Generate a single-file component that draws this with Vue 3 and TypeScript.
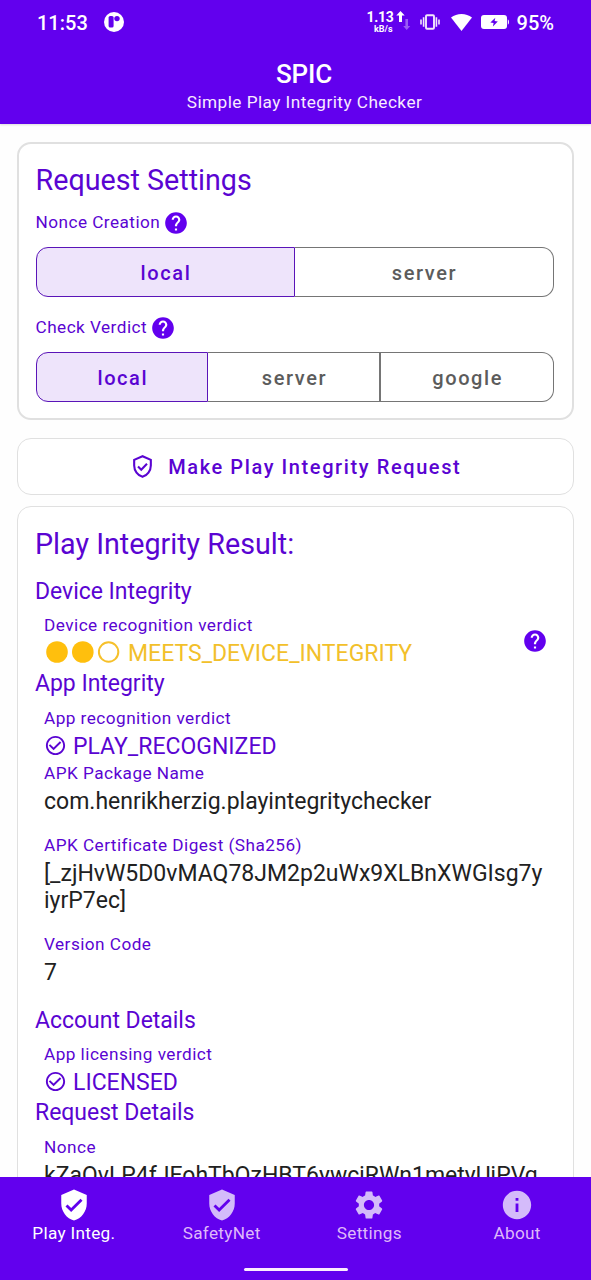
<script setup lang="ts">
interface Field {
  label: string
  lines: string[]
  kind: 'text' | 'ok' | 'device'
}
interface Section {
  title: string
  fields: Field[]
}

const nonceModes: string[] = ['local', 'server']
const verdictModes: string[] = ['local', 'server', 'google']

const sections: Section[] = [
  {
    title: 'Device Integrity',
    fields: [{ label: 'Device recognition verdict', lines: ['MEETS_DEVICE_INTEGRITY'], kind: 'device' }],
  },
  {
    title: 'App Integrity',
    fields: [
      { label: 'App recognition verdict', lines: ['PLAY_RECOGNIZED'], kind: 'ok' },
      { label: 'APK Package Name', lines: ['com.henrikherzig.playintegritychecker'], kind: 'text' },
      { label: 'APK Certificate Digest (Sha256)', lines: ['[_zjHvW5D0vMAQ78JM2p2uWx9XLBnXWGIsg7y', 'iyrP7ec]'], kind: 'text' },
      { label: 'Version Code', lines: ['7'], kind: 'text' },
    ],
  },
  {
    title: 'Account Details',
    fields: [{ label: 'App licensing verdict', lines: ['LICENSED'], kind: 'ok' }],
  },
  {
    title: 'Request Details',
    fields: [{ label: 'Nonce', lines: ['kZaQvLP4fJEohTbQzHBT6ywcjRWn1metyUjPVg'], kind: 'text' }],
  },
]

const shield = 'M12 1L3 5v6c0 5.55 3.84 10.74 9 12 5.16-1.26 9-6.45 9-12V5l-9-4zm-2 16l-4-4 1.41-1.41L10 14.17l6.59-6.59L18 9l-8 8z'
const tabs: { label: string; path: string }[] = [
  { label: 'Play Integ.', path: shield },
  { label: 'SafetyNet', path: shield },
  {
    label: 'Settings',
    path: 'M19.14 12.94c.04-.3.06-.61.06-.94 0-.32-.02-.64-.07-.94l2.03-1.58c.18-.14.23-.41.12-.61l-1.92-3.32c-.12-.22-.37-.29-.59-.22l-2.39.96c-.5-.38-1.03-.7-1.62-.94l-.36-2.54c-.04-.24-.24-.41-.48-.41h-3.84c-.24 0-.43.17-.47.41l-.36 2.54c-.59.24-1.13.57-1.62.94l-2.39-.96c-.22-.08-.47 0-.59.22L2.74 8.87c-.12.21-.08.47.12.61l2.03 1.58c-.05.3-.09.63-.09.94s.02.64.07.94l-2.03 1.58c-.18.14-.23.41-.12.61l1.92 3.32c.12.22.37.29.59.22l2.39-.96c.5.38 1.03.7 1.62.94l.36 2.54c.05.24.24.41.48.41h3.84c.24 0 .44-.17.47-.41l.36-2.54c.59-.24 1.13-.56 1.62-.94l2.39.96c.22.08.47 0 .59-.22l1.92-3.32c.12-.22.07-.47-.12-.61l-2.01-1.58zM12 15.6c-1.98 0-3.6-1.62-3.6-3.6s1.62-3.6 3.6-3.6 3.6 1.62 3.6 3.6-1.62 3.6-3.6 3.6z',
  },
  { label: 'About', path: 'M12 2C6.48 2 2 6.48 2 12s4.48 10 10 10 10-4.48 10-10S17.52 2 12 2zm1 15h-2v-6h2v6zm0-8h-2V7h2v2z' },
]
const help = 'M12 2C6.48 2 2 6.48 2 12s4.48 10 10 10 10-4.48 10-10S17.52 2 12 2zm1 17h-2v-2h2v2zm2.07-7.75l-.9.92C13.45 12.9 13 13.5 13 15h-2v-.5c0-1.1.45-2.1 1.17-2.83l1.24-1.26c.37-.36.59-.86.59-1.41 0-1.1-.9-2-2-2s-2 .9-2 2H8c0-2.21 1.79-4 4-4s4 1.79 4 4c0 .88-.36 1.68-.93 2.25z'
</script>

<template>
  <div class="screen">
    <header class="app-bar">
      <div class="status">
        <span class="clock">11:53</span>
        <svg class="notif" viewBox="0 0 20 20">
          <circle cx="10" cy="10" r="10" fill="#fff" />
          <rect x="4.6" y="4" width="5" height="11.6" rx="1.6" fill="#6200ee" />
          <circle cx="13" cy="6.6" r="2.7" fill="#6200ee" />
        </svg>
        <span class="spacer"></span>
        <span class="net"><span class="rate">1.13</span><span class="unit">kB/s</span></span>
        <svg class="arrows" viewBox="0 0 16 22">
          <path d="M4.500 1L8.700 5.600H6V12H3V5.600H.3z" fill="#fff" />
          <path d="M10.700 20L14.200 16H12V9H9.400V16H7.200z" fill="#9a5cf5" />
        </svg>
        <svg class="vibrate" viewBox="0 0 20 16" fill="none" stroke="#f3e6fb">
          <rect x="6" y="1.200" width="8" height="13.600" rx="1" stroke-width="1.900" />
          <path d="M3.600 3.200V12.800M16.400 3.200V12.800" stroke-width="1.600" />
          <path d="M1 5.500V10.500M19 5.500V10.500" stroke-width="1.600" />
        </svg>
        <svg class="wifi" viewBox="0 0 21 17"><path d="M0 3.600C3 1.200 6.600 0 10.500 0S18 1.200 21 3.600L10.500 17z" fill="#fff" /></svg>
        <svg class="battery" viewBox="0 0 28 14">
          <rect width="26" height="14" rx="3" fill="#fff" />
          <path d="M26.800 4.200q1.200.6 1.200 2.800t-1.200 2.800z" fill="#fff" />
          <path d="M14.300 2.800L9.400 7.500l3.200.6-.7 3.300 4.900-4.800-3.200-.6z" fill="#6200ee" />
        </svg>
        <span class="percent">95%</span>
      </div>
      <div class="titles">
        <h1>SPIC</h1>
        <p>Simple Play Integrity Checker</p>
      </div>
    </header>

    <main>
      <section class="card settings">
        <h2>Request Settings</h2>
        <div class="option"><span class="caption">Nonce Creation</span><svg class="help" viewBox="0 0 24 24"><path :d="help" /></svg></div>
        <div class="segments two">
          <button v-for="(m, i) in nonceModes" :key="m" :class="{ on: i === 0 }">{{ m }}</button>
        </div>
        <div class="option second"><span class="caption">Check Verdict</span><svg class="help" viewBox="0 0 24 24"><path :d="help" /></svg></div>
        <div class="segments three">
          <button v-for="(m, i) in verdictModes" :key="m" :class="{ on: i === 0 }">{{ m }}</button>
        </div>
      </section>

      <button class="card request">
        <svg viewBox="0 0 24 24" fill="none" stroke="currentColor" stroke-width="2">
          <path d="M12 2.100L4 5.650V11c0 5 3.400 9.600 8 10.950 4.600-1.350 8-5.950 8-10.950V5.650z" />
          <path d="M7.700 12l3.100 3.100 5.500-5.700" />
        </svg>
        <span>Make Play Integrity Request</span>
      </button>

      <section class="card result">
        <h2>Play Integrity Result:</h2>
        <div v-for="s in sections" :key="s.title" class="group">
          <h3>{{ s.title }}</h3>
          <div v-for="f in s.fields" :key="f.label" class="field" :class="f.kind">
            <div class="body">
              <div class="caption">{{ f.label }}</div>
              <div class="value">
                <svg v-if="f.kind === 'ok'" class="check" viewBox="0 0 24 24"><path d="M16.590 7.580L10 14.170l-3.590-3.580L5 12l5 5 8-8zM12 2C6.480 2 2 6.480 2 12s4.480 10 10 10 10-4.480 10-10S17.520 2 12 2zm0 18c-4.420 0-8-3.580-8-8s3.580-8 8-8 8 3.580 8 8-3.580 8-8 8z" /></svg>
                <svg v-if="f.kind === 'device'" class="dots" viewBox="0 0 74 22">
                  <circle cx="11" cy="11" r="10.800" />
                  <circle cx="36.800" cy="11" r="10.800" />
                  <circle cx="62.600" cy="11" r="9.700" class="ring" />
                </svg>
                <div><div v-for="l in f.lines" :key="l" class="line">{{ l }}</div></div>
              </div>
            </div>
            <svg v-if="f.kind === 'device'" class="help" viewBox="0 0 24 24"><path :d="help" /></svg>
          </div>
        </div>
      </section>
    </main>

    <footer>
      <nav>
        <div v-for="(t, i) in tabs" :key="t.label" class="tab" :class="{ active: i === 0 }">
          <svg viewBox="0 0 24 24"><path :d="t.path" /></svg>
          <span>{{ t.label }}</span>
        </div>
      </nav>
      <div class="handle"></div>
    </footer>
  </div>
</template>

<style>
html, body { margin: 0; overflow: hidden; background: #fefefe; }
</style>

<style scoped>
* { box-sizing: border-box; }
.screen { width: 591px; height: 1280px; display: flex; flex-direction: column; overflow: hidden; font-family: Roboto, "Liberation Sans", sans-serif; color: #5a04d2; background: #fefefe; white-space: nowrap; }
h1, h2, h3, p { margin: 0; font-weight: 400; }
svg { display: block; flex: none; }
button { font-family: inherit; margin: 0; padding: 0; background: none; }

.app-bar { flex: none; height: 124px; background: #6200ee; color: #fff; box-shadow: 0 1px 2px #0002; }
.status { height: 44px; padding: 0 37px 0 37px; display: flex; align-items: center; font-weight: 500; font-size: 20px; }
.clock, .percent { line-height: 24px; margin-top: 2px; }
.notif { width: 20px; height: 20px; margin-left: 16px; }
.spacer { flex: 1; }
.net { display: flex; flex-direction: column; align-items: flex-end; font-weight: 700; margin-top: -1px; }
.rate { font-size: 14px; line-height: 14px; margin-right: -1px; margin-top: 1px; letter-spacing: -.3px; }
.unit { font-size: 9px; line-height: 10px; }
.arrows { width: 16px; height: 22px; margin: -2px 0 0 3px; }
.vibrate { width: 20px; height: 16px; margin-left: 8px; }
.wifi { width: 21px; height: 17px; margin-left: 11px; }
.battery { width: 28px; height: 14px; margin-left: 9px; }
.percent { margin-left: 8px; }
.titles { padding: 15px 0 0 18px; text-align: center; }
.titles h1 { font-size: 26px; line-height: 30px; font-weight: 500; letter-spacing: -.2px; margin-left: -1px; }
.titles p { font-size: 17.200px; line-height: 20px; letter-spacing: .46px; margin-top: 3px; color: #f8ebff; }

main { flex: 1; min-height: 0; overflow: hidden; padding: 17.500px 17.500px 0 17px; display: flex; flex-direction: column; }
.card { flex: none; border: 1.500px solid #e0e0e0; border-radius: 14px; background: #fff; }
.settings { height: 278px; border-width: 2px; padding: 19px 18px 0 16.500px; }
h2 { font-size: 28.700px; line-height: 34px; }
.caption { font-size: 17.200px; line-height: 20px; letter-spacing: .46px; }
.option { display: flex; align-items: center; height: 26px; margin-top: 13px; }
.option .caption { margin-top: -2px; }
.option .help { margin-left: 3px; }
.help { width: 26px; height: 26px; fill: #6200ee; }
.option.second { margin-top: 18px; }
.option.second .caption { margin-top: -1px; }
.segments { display: grid; height: 50px; margin-top: 11px; }
.two { grid-template-columns: 1fr 1fr; }
.three { grid-template-columns: repeat(3, 1fr); }
.segments button { border: 1.500px solid #757575; color: #5c5c5c; font-size: 20px; font-weight: 500; letter-spacing: 1.600px; line-height: 24px; padding: 2px 0 0 2px; }
.segments button + button { border-left: 0; }
.segments button:not(:last-child):not(.on) { border-right-width: 2px; }
.segments button:first-child { border-radius: 12px 0 0 12px; }
.segments button:last-child { border-radius: 0 12px 12px 0; }
.segments .on { border-color: #5a14b8; background: #eee4fb; color: #5a04d2; }

.request { height: 57px; margin-top: 18px; display: flex; align-items: center; justify-content: center; gap: 13px; padding-left: 1px; color: #5a04d2; font-size: 20px; font-weight: 500; letter-spacing: 1.600px; }
.request svg { width: 25px; height: 25px; }
.request span { padding-top: 2px; }

.result { height: 760px; margin-top: 11.500px; padding: 20px 16px 0 17px; }
h3 { font-size: 23px; line-height: 27px; letter-spacing: -.03px; margin-bottom: 10.300px; }
.group:first-of-type { margin-top: 16.500px; }
.field { display: flex; align-items: center; padding: 0 9px 3.600px 9px; }
.field.text { padding-bottom: 20.100px; }
.body { flex: 1; }
.value { display: flex; align-items: center; font-size: 23px; line-height: 27px; margin-top: 5px; }
.text .value { color: #212121; }
.device .value { color: #f2c02a; }
.check { width: 23px; height: 23px; fill: #5a04d2; margin: -2px 6px 0 0; }
.dots { width: 74px; height: 22px; margin: -2px 8.500px 0 1.500px; fill: #ffbf0d; }
.ring { fill: none; stroke: #f6c02a; stroke-width: 2px; }

footer { flex: none; height: 103.500px; background: #6200ee; position: relative; z-index: 1; }
nav { display: grid; grid-template-columns: repeat(4, 1fr); padding-top: 11px; }
.tab { display: flex; flex-direction: column; align-items: center; color: #dfb8fa; font-size: 17.200px; line-height: 20px; letter-spacing: .3px; }
.tab svg { width: 34px; height: 34px; fill: #d4bbfa; margin-bottom: 1px; }
.tab.active { color: #fff; }
.tab.active svg { fill: #fff; }
.handle { width: 104px; height: 3px; border-radius: 2px; background: #fcecff; margin: 25px auto 0; }
</style>
